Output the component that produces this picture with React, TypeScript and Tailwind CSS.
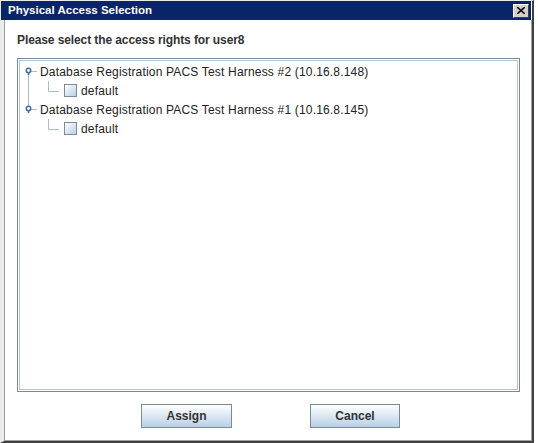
import React from 'react';

const font = { fontFamily: '"Liberation Sans", Arial, sans-serif' };

const NodeHandle: React.FC<{ first: boolean; last: boolean }> = ({ first, last }) => (
  <svg width="12" height="19" viewBox="0 0 12 19" className="shrink-0">
    {!first && <line x1="3.5" y1="0" x2="3.5" y2="6" stroke="#a9bcd3" strokeWidth="1" />}
    {!last && <line x1="3.5" y1="11" x2="3.5" y2="19" stroke="#a9bcd3" strokeWidth="1" />}
    <line x1="6" y1="9.5" x2="12" y2="9.5" stroke="#a9bcd3" strokeWidth="1" />
    <line x1="3.5" y1="10" x2="3.5" y2="13" stroke="#3b6ea8" strokeWidth="1.5" />
    <circle cx="3.5" cy="8.5" r="2.2" fill="#fff" stroke="#3b6ea8" strokeWidth="1.5" />
  </svg>
);

const CheckBox: React.FC = () => (
  <span className="inline-block w-[13px] h-[13px] border border-[#7a8a99] bg-gradient-to-br from-white to-[#b8cfe5] shrink-0" />
);

const servers = [
  'Database Registration PACS Test Harness #2 (10.16.8.148)',
  'Database Registration PACS Test Harness #1 (10.16.8.145)',
];

export default function App() {
  return (
    <div className="w-[538px] h-[443px] bg-white flex overflow-hidden" style={font}>
      {/* Window frame */}
      <div className="w-[534px] h-[443px] flex flex-col border-l-4 border-t border-r-2 border-b-2 border-l-[#ececec] border-t-[#ececec] border-r-[#404040] border-b-[#404040]">
        {/* Title bar */}
        <div className="h-[19px] -ml-[3px] mr-[1px] bg-[#0a246a] flex items-center justify-between pl-[7px] pr-[2px]">
          <span className="text-white font-bold text-[11.5px] leading-none">Physical Access Selection</span>
          <button className="w-[16px] h-[14px] bg-[#d4d0c8] border border-t-white border-l-white border-r-[#404040] border-b-[#404040] flex items-center justify-center">
            <svg width="8" height="7" viewBox="0 0 8 7">
              <path d="M0 0 L8 7 M8 0 L0 7" stroke="#000" strokeWidth="1.6" />
            </svg>
          </button>
        </div>

        {/* Content */}
        <div className="flex-1 flex flex-col bg-white border-l border-r border-b border-[#a0a0a0]">
          <div className="h-[38px] flex items-center pl-[12px] pt-[2px]">
            <span className="font-bold text-[12px] text-[#333333] tracking-[-0.1px]">Please select the access rights for user8</span>
          </div>

          {/* Tree */}
          <div className="ml-[12px] mr-[11px] h-[334px] border border-[#7a8a99] p-[1px]">
            <div className="h-full border border-[#b8c4cf] bg-white pt-[1px] pl-[5px]">
              {servers.map((s, i) => {
                const first = i === 0;
                const last = i === servers.length - 1;
                return (
                  <div key={s}>
                    <div className="h-[19px] flex items-center">
                      <NodeHandle first={first} last={last} />
                      <span className="ml-[3px] text-[12px] text-[#222222] whitespace-nowrap tracking-[0.18px]">{s}</span>
                    </div>
                    <div className="h-[19px] flex items-center">
                      <svg width="37" height="19" viewBox="0 0 37 19" className="shrink-0">
                        {!last && <line x1="3.5" y1="0" x2="3.5" y2="19" stroke="#a9bcd3" strokeWidth="1" />}
                        <path d="M23.5 0 V10.5 H34" stroke="#a9bcd3" strokeWidth="1" fill="none" />
                      </svg>
                      <span className="ml-[2px] flex"><CheckBox /></span>
                      <span className="ml-[4px] text-[12px] text-[#222222] tracking-[0.18px]">default</span>
                    </div>
                  </div>
                );
              })}
            </div>
          </div>

          {/* Buttons */}
          <div className="flex items-center pt-[12px] pl-[136px] gap-[78px]">
            <button className="w-[91px] h-[24px] border border-[#7a8a99] bg-gradient-to-b from-white to-[#b8cfe5] font-bold text-[12px] text-[#333333]">
              Assign
            </button>
            <button className="w-[90px] h-[24px] border border-[#7a8a99] bg-gradient-to-b from-white to-[#b8cfe5] font-bold text-[12px] text-[#333333]">
              Cancel
            </button>
          </div>
        </div>
      </div>
    </div>
  );
}
